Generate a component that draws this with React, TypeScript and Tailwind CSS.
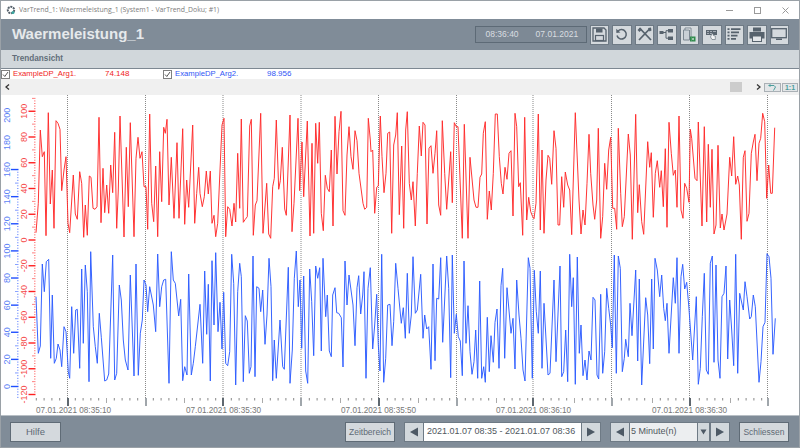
import React from "react";

const FONT = { fontFamily: '"Liberation Sans", Arial, sans-serif' };

function pts(s: string, ox: number, oy: number) {
  return s
    .trim()
    .split(/\s+/)
    .map((p) => {
      const [x, y] = p.split(",").map(Number);
      return `${(ox + x / 3).toFixed(1)},${(oy + y / 3).toFixed(1)}`;
    })
    .join(" ");
}

const RED = [
  pts("108,428 115,340 121,120 127,200 133,185 138,437 145,68 151,342 157,240 162,415 168,92 174,100 180,118 185,302 192,240 198,200 204,400 209,428 220,255 226,372 232,388 239,245 245,280 251,442 256,345 262,436 268,258 273,262 279,355 285,358 291,350 297,82 303,398 309,235 314,368 320,285 326,370 332,225 338,308 344,127 350,415 355,300 360,78 372,441 379,172 385,350 391,98 402,440 408,205 414,142 420,205 426,185 432,290 438,290 443,418 449,72 455,340 461,395 467,228 473,440 479,185 485,335 491,112 496,130 501,88 507,345 514,202 522,385 531,158 537,385 548,116 554,403 560,270 566,352 578,105 584,400 590,310 596,232", 0, 90),
  pts("0,310 7,350 13,320 19,243 25,312 31,243 36,400 42,376 47,440 53,400 60,240 66,105 72,85 77,440 83,350 89,358 96,408 102,340 107,396 113,190 119,355 124,87 130,397 136,388 142,380 149,108 154,88 160,436 166,345 171,332 182,70 189,430 200,280 206,432 212,445 218,290 223,265 229,90 236,298 241,272 247,172 254,357 259,376 270,75 276,425 282,340 294,85 299,302 306,156 311,320 322,93 330,438 336,160 341,430 347,100 353,220 358,97 364,370 370,422 376,256 382,295 388,305 394,180 399,408 405,79 411,252 417,125 423,64 429,362 435,376 441,195 447,110 453,200 459,238 465,122 471,152 477,250 489,340 494,358 500,352 505,85 511,150 513,185 518,180 524,370 530,292 535,288 541,78 546,200 552,308 558,250 563,130 569,126 575,430 581,165 587,135 592,68 598,374", 200, 90),
  pts("5,168 11,415 17,120 22,65 28,280 34,330 39,275 46,408 52,250 58,108 64,198 69,97 75,105 81,402 87,175 93,167 99,250 105,190 110,122 116,345 122,376 127,92 134,250 140,358 152,185 157,338 163,98 169,110 174,110 187,445 193,103 204,445 210,202 222,330 228,352 234,352 240,262 245,252 250,130 256,95 262,388 268,303 274,360 280,250 286,72 292,72 298,200 304,280 309,312 315,232 321,268 327,190 333,182 339,378 345,70 350,110 356,290 361,278 368,436 374,82 380,390 386,322 392,365 398,380 402,386 408,340 415,72 421,420 426,180 432,430 438,270 444,196 449,205 455,283 462,122 468,175 474,405 479,405 485,260 491,352 496,246 503,285 509,300 515,434 526,68 537,330 543,432 549,360 555,405 561,280 567,133 572,250 579,345 584,388 590,330 595,115", 400, 90),
  pts("2,445 8,380 14,220 20,298 26,180 32,142 38,355 44,355 50,418 55,115 62,310 67,410 73,380 85,132 91,195 97,448 107,73 113,368 118,284 125,395 131,433 143,155 149,232 154,188 160,382 166,250 172,212 179,292 184,242 190,350 196,176 201,412 207,97 214,190 220,256 226,240 231,352 237,78 243,360 249,385 254,280 260,295 267,337 271,118 275,145 285,265 291,272 295,96 306,408 313,110 320,396 325,163 331,352 336,178 342,432 348,405 354,166 361,414 366,372 372,420 381,372 389,202 395,258 401,140 407,283 413,258 418,285 424,448 430,202 435,182 441,394 447,370 454,190 460,156 465,133 471,272 477,160 482,145 488,70 494,95 500,325 506,225 512,310 517,310 524,113", 600, 90),
].join(" ");

const BLUE = [
  pts("108,140 115,310 121,288 127,42 133,125 139,35 146,28 152,325 157,135 163,340 169,325 174,282 180,300 185,350 192,230 198,245 205,365 209,385 215,170 221,310 227,180 232,178 239,355 245,57 250,280 256,45 262,125 267,395 272,5 280,230 286,290 292,340 298,190 304,262 314,393 320,390 326,372 338,15 344,390 350,370 358,105 364,150 370,270 376,330 384,360 391,75 402,378 408,42 415,376 421,250 427,210 432,90 438,105 443,185 449,110 460,165 467,245 473,12 479,170 485,110 491,90 497,88 507,400 514,5 520,90 526,100 536,198 542,148 548,392 554,350 561,375 566,72 574,375 580,340 586,290", 0, 250),
  pts("0,178 8,355 14,78 20,268 25,118 31,408 36,47 42,240 47,23 54,260 60,172 66,312 71,142 77,355 83,362 89,320 95,28 101,115 107,420 113,140 119,55 124,95 130,410 136,212 142,228 148,385 153,365 159,33 165,395 170,125 177,130 182,200 188,135 195,298 201,210 207,40 213,125 218,407 223,285 229,400 240,225 248,365 253,373 265,67 270,415 277,315 283,100 289,18 295,185 300,105 305,310 311,93 317,378 323,415 329,72 335,170 341,332 347,63 353,100 359,68 364,318 369,40 377,215 382,150 388,318 394,335 398,150 405,128 410,203 416,205 424,218 429,366 435,48 441,180 447,90 459,180 465,302 471,128 476,92 482,207 488,150 492,80 498,400 504,130 511,68 518,312 524,240 530,148 535,300 540,378 545,28 551,412 557,340 563,180 570,178 576,302 581,230 587,55 594,130 600,195", 200, 245),
  pts("4,235 10,188 16,280 22,85 28,265 34,210 39,35 46,205 52,195 62,88 69,280 74,210 80,252 86,245 93,373 99,57 105,347 110,160 116,162 122,38 128,292 140,33 146,130 152,398 157,30 163,265 169,208 175,275 181,288 187,392 192,48 198,295 204,182 210,320 216,388 222,350 227,255 233,400 239,108 245,400 251,365 256,412 262,217 268,380 273,272 280,352 285,232 291,192 297,370 303,122 308,70 314,340 321,128 333,265 339,220 345,372 350,105 357,210 363,280 369,375 375,408 385,38 390,70 397,400 403,76 409,200 415,265 421,78 426,370 432,175 444,390 450,385 462,105 468,350 480,63 485,395 491,380 497,255 503,410 509,28 515,185 520,98 526,418 532,36 538,325 543,240 549,392 555,345 561,405 567,318 573,345 579,157 585,165 591,390 596,402", 400, 245),
  pts("2,148 8,385 14,320 20,130 26,190 32,240 37,308 43,30 49,385 55,33 61,70 67,380 73,340 77,283 85,335 90,175 96,272 107,75 113,348 118,102 125,420 137,158 143,210 149,356 155,102 160,312 165,40 172,75 179,155 185,90 191,190 196,227 201,175 207,325 220,98 226,175 231,38 237,325 243,95 248,58 254,132 260,112 266,180 278,345 289,155 295,418 301,370 307,215 313,85 319,375 325,388 331,55 337,33 342,352 348,60 354,345 360,400 366,155 372,145 378,63 383,342 389,165 395,255 401,362 407,28 413,385 419,145 430,195 435,110 441,155 449,222 454,215 460,150 466,185 477,412 483,350 489,245 495,232 501,26 507,35 513,100 519,328 526,220", 600, 245),
].join(" ");

const GRID = [67.5, 145.5, 223, 301, 378.5, 456.5, 533, 611.5, 689.5, 767.5];
const LABELS: [number, string][] = [
  [36, "07.01.2021 08:35:10"],
  [186, "07.01.2021 08:35:30"],
  [341, "07.01.2021 08:35:50"],
  [496, "07.01.2021 08:36:10"],
  [652, "07.01.2021 08:36:30"],
];

function Chart() {
  const blueTicks: React.ReactNode[] = [];
  for (let i = -4; i <= 80; i++) {
    const y = 386.5 - i * 2.712;
    const major = i % 10 === 0 && i >= 0;
    const mid = i % 5 === 0;
    if (y < 97) continue;
    blueTicks.push(
      <line key={i} x1={major ? 11 : mid ? 15 : 17} x2={18.5} y1={y} y2={y} stroke="#1f4fff" strokeWidth={major ? 1.4 : 0.8} opacity={major ? 1 : 0.7} />
    );
  }
  const redTicks: React.ReactNode[] = [];
  for (let i = -65; i <= 60; i++) {
    const y = 240 - i * 2.575;
    const major = i % 10 === 0 && i <= 50 && i >= -60;
    const mid = i % 5 === 0;
    if (y < 97 || y > 397) continue;
    redTicks.push(
      <line key={i} x1={major ? 28.5 : mid ? 32 : 34} x2={35.5} y1={y} y2={y} stroke="#ff2020" strokeWidth={major ? 1.4 : 0.8} opacity={major ? 1 : 0.7} />
    );
  }
  const blueVals = [200, 180, 160, 140, 120, 100, 80, 60, 40, 20, 0];
  const redVals = [100, 80, 60, 40, 20, 0, -20, -40, -60, -80, -100, -120];
  const xTicks: React.ReactNode[] = [];
  for (let i = 0; i < 95; i++) {
    const x = 36.3 + i * 7.8;
    const k = Math.round((x - 67.5) / 7.8);
    if (k % 10 === 0 || x > 790) continue;
    const mid = ((k % 10) + 10) % 10 === 5;
    xTicks.push(<line key={i} x1={x} x2={x} y1={398} y2={mid ? 403 : 400.5} stroke={mid ? "#aaa" : "#888"} strokeWidth={1} />);
  }
  return (
    <svg width={798} height={320} viewBox="1 95 798 320" className="block bg-white shrink-0" style={FONT}>
      {GRID.map((x, i) => (
        <g key={x}>
          <line x1={x} x2={x} y1={95} y2={398} stroke="#8a8a8a" strokeWidth={1} strokeDasharray="1 1" />
          <rect x={Math.round(x) - 1} y={398} width={2} height={8} fill={i % 2 === 0 ? "#5f6870" : "#a0a6ab"} />
        </g>
      ))}
      {blueTicks}
      {redTicks}
      {blueVals.map((v) => {
        const y = 386.5 - v * 1.356;
        return (
          <text key={v} transform={`translate(10 ${y}) rotate(-90)`} textAnchor="middle" fontSize={9} fill="#5b7ff5">
            {v}
          </text>
        );
      })}
      {redVals.map((v) => {
        const y = 240 - v * 1.2875;
        return (
          <text key={v} transform={`translate(27 ${y}) rotate(-90)`} textAnchor="middle" fontSize={9} fill="#f54a4a">
            {v}
          </text>
        );
      })}
      <polyline points={RED} fill="none" stroke="#ff2a2a" strokeWidth={0.95} strokeLinejoin="round" />
      <polyline points={BLUE} fill="none" stroke="#2c5cff" strokeWidth={0.95} strokeLinejoin="round" />
      {xTicks}
      {LABELS.map(([x, t]) => (
        <text key={x} x={x} y={413} fontSize={8.2} fill="#777777">
          {t}
        </text>
      ))}
    </svg>
  );
}

const C = "#56626d";

const icons: React.ReactNode[] = [
  <svg key="save" width="15" height="15" viewBox="0 0 15 15">
    <path d="M1 1h11l2 2v11H1z" fill="none" stroke={C} strokeWidth="1.3" />
    <rect x="4" y="1.5" width="6.5" height="4" fill={C} />
    <rect x="3.5" y="8.5" width="8" height="5" fill="none" stroke={C} strokeWidth="1.2" />
  </svg>,
  <svg key="undo" width="13" height="13" viewBox="0 0 13 13">
    <path d="M3 3.2A4.7 4.7 0 1 1 2 7.5" fill="none" stroke={C} strokeWidth="1.5" />
    <path d="M1.2 0.8 1.4 5 5.4 4.4z" fill={C} />
  </svg>,
  <svg key="tools" width="15" height="15" viewBox="0 0 15 15">
    <path d="M2.5 1 14 13" stroke={C} strokeWidth="1.8" />
    <path d="M13 1.500 2 13" stroke={C} strokeWidth="1.8" />
    <path d="M0.500 3 3 0.500 5 2.500 2.500 5z M11 1l3-0.500 0.500 3-2 1z" fill={C} />
  </svg>,
  <svg key="tree" width="15" height="13" viewBox="0 0 15 13">
    <rect x="0.500" y="3" width="4" height="3" fill={C} />
    <rect x="9" y="1" width="5" height="3.500" fill={C} />
    <rect x="9" y="8.500" width="5" height="3.500" fill={C} />
    <path d="M4 4.500h3M7 2.700h2M7 2.700v7.500h2" fill="none" stroke={C} />
  </svg>,
  <svg key="doc" width="14" height="15" viewBox="0 0 14 15">
    <path d="M3 1h6v10H3z" fill="#e8ebee" stroke="#7b8791" />
    <path d="M1.500 3h6v10h-6z" fill="#c9d0d6" stroke="#7b8791" />
    <rect x="8" y="9.500" width="5.500" height="5" fill="#2f8a4c" />
    <path d="M9.500 11l2.500 2M12 11l-2.500 2" stroke="#fff" strokeWidth=".6" />
  </svg>,
  <svg key="hand" width="13" height="13" viewBox="0 0 13 13">
    <rect x="1" y="2" width="11" height="5" fill="#59646e" />
    <path d="M2 3.500h2M5 3.500h2M8 3.500h3M2 5.500h2M5 5.500h2" stroke="#c5ccd2" strokeWidth=".7" />
    <path d="M7 5.500l1 0 .3 2 2 .5v3.500H7L5.500 9z" fill="#f4f5f6" stroke="#59646e" strokeWidth=".6" />
  </svg>,
  <svg key="list" width="14" height="13" viewBox="0 0 14 13">
    <path d="M0.500 1.200h2M4 1.200h9.500M0.500 4.400h2M4 4.400h8M0.500 7.600h2M4 7.600h6.500M0.500 10.800h2M4 10.800h5" stroke={C} strokeWidth="1.700" />
  </svg>,
  <svg key="print" width="16" height="15" viewBox="0 0 16 15">
    <rect x="4" y="0.500" width="8" height="4" fill={C} />
    <rect x="0.500" y="5" width="15" height="6.500" fill={C} />
    <rect x="3.500" y="9" width="9" height="5.500" fill="#e3e6e9" stroke={C} />
  </svg>,
  <svg key="mon" width="16" height="13" viewBox="0 0 16 13">
    <rect x="0.700" y="0.700" width="14.600" height="9" fill="none" stroke={C} strokeWidth="1.300" />
    <rect x="5" y="10.500" width="6" height="1.500" fill={C} />
  </svg>,
];

function Tri({ dir }: { dir: "l" | "r" }) {
  return (
    <svg width="10" height="10" viewBox="0 0 10 10">
      <path d={dir === "l" ? "M9 0.500V9.500L1 5z" : "M1 0.500V9.500L9 5z"} fill="#4d5965" />
    </svg>
  );
}

function SideBtn({ dir, w }: { dir: "l" | "r"; w: string }) {
  return (
    <div className={`${w} h-full flex items-center justify-center bg-[#d2d8dc] border border-[#6e7a85]`}>
      <Tri dir={dir} />
    </div>
  );
}

function Check() {
  return (
    <div className="w-[9px] h-[9px] border border-[#808080] bg-white flex items-center justify-center shrink-0">
      <svg width="7" height="7" viewBox="0 0 7 7">
        <path d="M1 3.500 2.800 5.500 6 1" fill="none" stroke="#444" strokeWidth="0.9" />
      </svg>
    </div>
  );
}

export default function App() {
  return (
    <div className="w-[800px] h-[448px] flex flex-col overflow-hidden border border-[#9aa1a7] bg-white" style={FONT}>
      <div className="h-[18px] bg-white flex items-center pl-[5px] shrink-0">
        <svg width="10" height="10" viewBox="0 0 10 10">
          <circle cx="5" cy="5" r="3.200" fill="none" stroke="#56616b" strokeWidth="2" strokeDasharray="2 .8" />
          <circle cx="7" cy="7.500" r="1.500" fill="#3aa6a0" />
        </svg>
        <span className="ml-[3px] text-[6.900px] text-[#7c7c7c]" style={{ fontFamily: '"Open Sans", sans-serif' }}>
          VarTrend_1: Waermeleistung_1 (System1 - VarTrend_Doku; #1)
        </span>
        <div className="ml-auto flex items-center h-full pr-[10px] gap-[21px]">
          <svg width="7" height="7" viewBox="0 0 7 7">
            <path d="M0 3.500H7" stroke="#9a9a9a" />
          </svg>
          <svg width="7" height="7" viewBox="0 0 7 7">
            <rect x="0.500" y="0.500" width="6" height="6" fill="none" stroke="#9a9a9a" />
          </svg>
          <svg width="7" height="7" viewBox="0 0 7 7">
            <path d="M0.500 0.500l6 6m0-6-6 6" fill="none" stroke="#9a9a9a" />
          </svg>
        </div>
      </div>
      <div className="h-[31px] bg-[#808c98] flex items-center pl-[11px] pr-[10px] shrink-0">
        <span className="text-[15px] font-bold text-[#e6e9eb]">Waermeleistung_1</span>
        <div className="ml-auto mr-[3px] w-[112px] h-[17px] border border-[#5d6a76] bg-[#7d8995] flex items-center pl-[10px] text-[8.500px] text-[#d9dde0]">
          <span>08:36:40</span>
          <span className="ml-[17px]">07.01.2021</span>
        </div>
        <div className="flex gap-[3px]">
          {icons.map((ic, i) => (
            <div key={i} className="w-[19.500px] h-[20px] bg-[#d4d9dd] border border-[#6e7a85] flex items-center justify-center">
              {ic}
            </div>
          ))}
        </div>
      </div>
      <div className="h-[19px] bg-[#d1d7db] flex items-center pl-[11px] text-[8.200px] font-bold text-[#626e79] shrink-0 border-b border-[#7d8892]">
        Trendansicht
      </div>
      <div className="h-[10px] flex items-center shrink-0 bg-white">
        <Check />
        <span className="ml-[3px] w-[92px] text-[7.700px] text-[#f01c1c]">ExampleDP_Arg1.</span>
        <span className="w-[58px] text-[8px] text-[#f01c1c]">74.148</span>
        <Check />
        <span className="ml-[3px] w-[92px] text-[7.700px] text-[#2f55f5]">ExampleDP_Arg2.</span>
        <span className="text-[8px] text-[#2f55f5]">98.956</span>
      </div>
      <div className="h-[16px] bg-[#f0f0f0] flex items-center pl-[4px] pr-[1px] shrink-0">
        <svg width="5" height="6" viewBox="0 0 5 6">
          <path d="M4 0.500 1 3l3 2.500" fill="none" stroke="#333" strokeWidth="1.300" />
        </svg>
        <div className="ml-auto w-[12px] h-[10px] bg-[#cccccc]" />
        <svg width="5" height="6" viewBox="0 0 5 6" className="ml-[14px]">
          <path d="M1 0.500 4 3l-3 2.500" fill="none" stroke="#333" strokeWidth="1.300" />
        </svg>
        <div className="ml-[3px] w-[17px] h-[9px] bg-[#e3e6e8] border border-[#aab0b5] flex items-center justify-center">
          <svg width="9" height="7" viewBox="0 0 9 7">
            <path d="M1 1.500h5l1.500 1.500-2 3.500" fill="none" stroke="#4a9d9c" strokeWidth="1" />
            <path d="M0 1.500 2.500 0v3z" fill="#4a9d9c" />
          </svg>
        </div>
        <div className="ml-[1px] w-[16px] h-[9px] bg-[#e3e6e8] border border-[#aab0b5] flex items-center justify-center text-[7px] font-bold leading-none text-[#4a9d9c]">
          1:1
        </div>
      </div>
      <Chart />
      <div className="flex-1 bg-[#808c98] border-t border-[#b8bfc5] flex items-center pl-[9px] pt-[1px] text-[#5e6a75]">
        <div className="w-[51px] h-[20px] bg-[#d4d9dd] border border-[#5f6b76] flex items-center justify-center text-[9.500px]">Hilfe</div>
        <div className="ml-[284px] w-[50px] h-[20px] bg-[#d4d9dd] border border-[#5f6b76] flex items-center justify-center text-[8.500px]">Zeitbereich</div>
        <div className="ml-[9px] h-[20px] flex">
          <SideBtn dir="l" w="w-[20px]" />
          <div className="w-[157px] h-full bg-white border-y border-[#6e7a85] flex items-center pl-[3px] text-[9px] text-[#50575e] whitespace-nowrap">
            2021.01.07 08:35 - 2021.01.07 08:36
          </div>
          <SideBtn dir="r" w="w-[20px]" />
        </div>
        <div className="ml-[9px] h-[20px] flex">
          <SideBtn dir="l" w="w-[20px]" />
          <div className="w-[67px] h-full bg-[#eceef0] border-y border-[#6e7a85] flex items-center pl-[1px] text-[9px] text-[#50575e]">5 Minute(n)</div>
          <div className="w-[13px] h-full bg-[#d2d8dc] border border-[#6e7a85] flex items-center justify-center">
            <svg width="7" height="6" viewBox="0 0 7 6">
              <path d="M0.500 0.500h6L3.500 5.500z" fill="#4d5965" />
            </svg>
          </div>
          <SideBtn dir="r" w="w-[20px]" />
        </div>
        <div className="ml-[9px] w-[50px] h-[20px] bg-[#d4d9dd] border border-[#5f6b76] flex items-center justify-center text-[8.500px]">Schliessen</div>
      </div>
    </div>
  );
}
